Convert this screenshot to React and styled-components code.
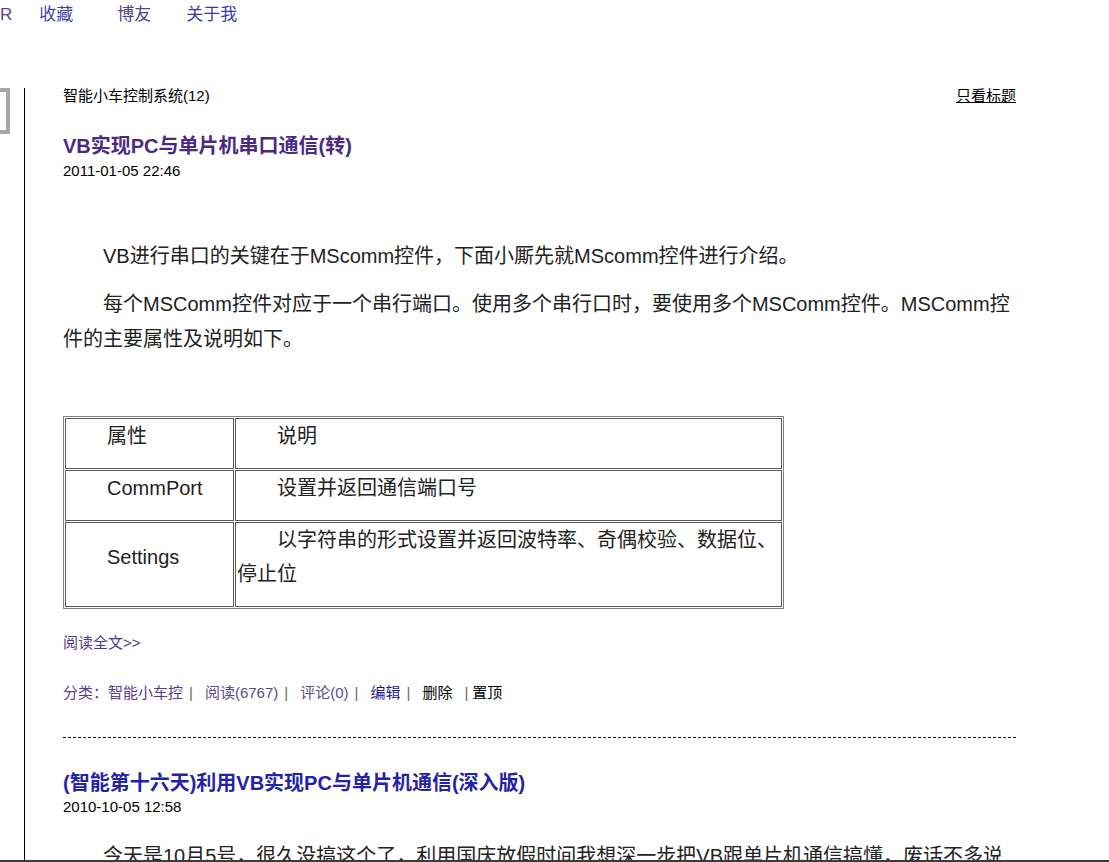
import React from 'react';
import styled, { createGlobalStyle } from 'styled-components';

const GlobalStyle = createGlobalStyle`
  html, body {
    margin: 0;
    padding: 0;
    background: #ffffff;
  }
  body {
    font-family: "Liberation Sans", "Noto Sans CJK SC", sans-serif;
    color: #000;
  }
`;

const sans = `"Liberation Sans", "Noto Sans CJK SC", sans-serif`;

const Page = styled.div`
  height: 862px;
  box-sizing: border-box;
  border-bottom: 2px solid #3c3c3c;
  overflow: hidden;
  display: flex;
  flex-direction: column;
`;

const NavBar = styled.div`
  display: flex;
  align-items: center;
  height: 30px;
  font-size: 17px;
  font-family: ${sans};
`;

const NavLink = styled.a`
  color: ${p => p.color};
  margin-left: ${p => p.gap}px;
  text-decoration: none;
  line-height: 30px;
`;

const Body = styled.div`
  display: flex;
  flex: 1;
  margin-top: 58px;
`;

const Side = styled.div`
  width: 24px;
  flex-shrink: 0;
`;

const SideBox = styled.div`
  width: 6px;
  height: 38px;
  border: 4px solid #a8a8a8;
  border-left: none;
`;

const Main = styled.div`
  border-left: 1px solid #000;
  padding-left: 38px;
  width: 953px;
  display: flex;
  flex-direction: column;
`;

const TopRow = styled.div`
  display: flex;
  justify-content: space-between;
  font-size: 15px;
  line-height: 16px;
`;

const TitleOnly = styled.a`
  color: #000;
  text-decoration: underline;
`;

const PostTitle = styled.a`
  display: block;
  font-size: 20px;
  font-weight: bold;
  line-height: 26px;
  color: ${p => p.color};
  text-decoration: none;
  margin-top: ${p => p.top}px;
`;

const PostDate = styled.div`
  font-size: 15px;
  line-height: 18px;
  margin-top: ${p => p.top ?? 3}px;
  color: #000;
`;

const Para = styled.p`
  font-size: 20px;
  line-height: 35px;
  text-indent: 40px;
  color: #222;
  margin: ${p => p.top}px 0 0;
  white-space: ${p => (p.nowrap ? 'nowrap' : 'normal')};
`;

const Table = styled.table`
  margin-top: 59px;
  width: 721px;
  table-layout: fixed;
  border-collapse: separate;
  border-spacing: 1px;
  border: 1px solid #808080;
`;

const Cell = styled.td`
  border: 1px solid #5a5a5a;
  padding: 0 1px;
  vertical-align: middle;
  width: ${p => (p.w ? `${p.w}px` : 'auto')};
`;

const CellText = styled.p`
  margin: 0 0 15px;
  font-size: 20px;
  line-height: 34px;
  text-indent: 40px;
  color: #222;
`;

const More = styled.a`
  margin-top: 25px;
  font-size: 15px;
  line-height: 18px;
  color: #4f3a86;
  text-decoration: none;
`;

const Meta = styled.div`
  margin-top: 32px;
  font-size: 15px;
  line-height: 18px;
  display: flex;
  align-items: center;
`;

const MetaLink = styled.a`
  color: ${p => p.color};
  text-decoration: none;
`;

const Pipe = styled.span`
  color: #6b6b55;
  margin: 0 ${p => p.r ?? 12}px 0 ${p => p.l ?? 6}px;
`;

const Divider = styled.div`
  margin-top: 35px;
  border-top: 1px dashed #000;
`;

const rows = [
  { name: '属性', desc: ['说明'] },
  { name: 'CommPort', desc: ['设置并返回通信端口号'] },
  { name: 'Settings', desc: ['以字符串的形式设置并返回波特率、奇偶校验、数据位、停止位'] },
];

export default function App() {
  return (
    <Page>
      <GlobalStyle />
      <NavBar>
        <NavLink color="#5c3d8e" gap={0}>R</NavLink>
        <NavLink color="#3f3fb0" gap={27}>收藏</NavLink>
        <NavLink color="#54428e" gap={44}>博友</NavLink>
        <NavLink color="#3a3aa8" gap={35}>关于我</NavLink>
      </NavBar>
      <Body>
        <Side>
          <SideBox />
        </Side>
        <Main>
          <TopRow>
            <span>智能小车控制系统(12)</span>
            <TitleOnly>只看标题</TitleOnly>
          </TopRow>
          <PostTitle color="#4b2a84" top={29}>VB实现PC与单片机串口通信(转)</PostTitle>
          <PostDate>2011-01-05 22:46</PostDate>
          <Para top={59}>VB进行串口的关键在于MScomm控件，下面小厮先就MScomm控件进行介绍。</Para>
          <Para top={13}>每个MSComm控件对应于一个串行端口。使用多个串行口时，要使用多个MSComm控件。MSComm控件的主要属性及说明如下。</Para>
          <Table>
            <tbody>
              {rows.map(r => (
                <tr key={r.name}>
                  <Cell w={165}>
                    <CellText>{r.name}</CellText>
                  </Cell>
                  <Cell>
                    {r.desc.map(d => (
                      <CellText key={d}>{d}</CellText>
                    ))}
                  </Cell>
                </tr>
              ))}
            </tbody>
          </Table>
          <More>阅读全文&gt;&gt;</More>
          <Meta>
            <MetaLink color="#56408c">分类：智能小车控</MetaLink>
            <Pipe>|</Pipe>
            <MetaLink color="#5a4a8e">阅读(6767)</MetaLink>
            <Pipe>|</Pipe>
            <MetaLink color="#5a4a8e">评论(0)</MetaLink>
            <Pipe>|</Pipe>
            <MetaLink color="#1a1a8a">编辑</MetaLink>
            <Pipe>|</Pipe>
            <MetaLink color="#000">删除</MetaLink>
            <Pipe l={12} r={4}>|</Pipe>
            <MetaLink color="#000">置顶</MetaLink>
          </Meta>
          <Divider />
          <PostTitle color="#2323a8" top={32}>(智能第十六天)利用VB实现PC与单片机通信(深入版)</PostTitle>
          <PostDate top={2}>2010-10-05 12:58</PostDate>
          <Para top={23} nowrap>今天是10月5号，很久没搞这个了，利用国庆放假时间我想深一步把VB跟单片机通信搞懂，废话不多说</Para>
        </Main>
      </Body>
    </Page>
  );
}
